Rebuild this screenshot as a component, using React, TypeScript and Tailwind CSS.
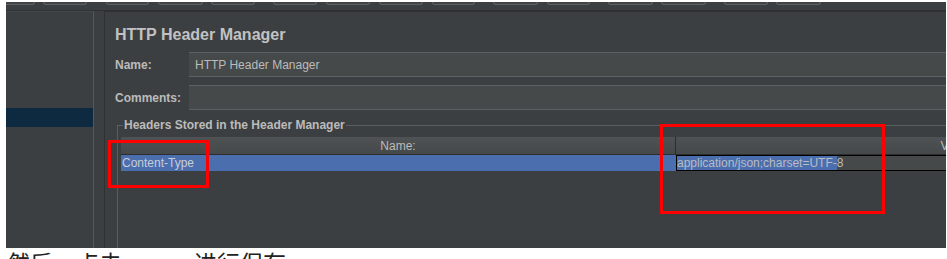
import React from "react";

const buttons: string[] = [
  "w-[29px] ml-0 rounded-bl-none border-l-0",
  "w-[44px] ml-[8px]",
  "w-[43px] ml-[19px]",
  "w-[45px] ml-[9px]",
  "w-[44px] ml-[8px]",
  "w-[44px] ml-[18px]",
  "w-[44px] ml-[9px]",
  "w-[44px] ml-[9px]",
  "w-[43px] ml-[9px]",
  "w-[45px] ml-[18px]",
  "w-[43px] ml-[9px]",
  "w-[45px] ml-[18px]",
  "w-[45px] ml-[8px]",
  "w-[44px] ml-[18px]",
  "w-[45px] ml-[8px]",
];

export default function App() {
  return (
    <div className="relative w-[947px] h-[259px] overflow-hidden bg-white font-['Liberation_Sans',Arial,sans-serif]">
      <div className="ml-[6px] mt-[2px] w-[940px] h-[246px] bg-[#3c3f41] flex flex-col overflow-hidden">
        {/* toolbar remnants */}
        <div className="h-[9px] flex items-start border-b border-[#2e3032] shrink-0">
          {buttons.map((c, i) => (
            <div
              key={i}
              className={`h-[3px] shrink-0 bg-[#414446] border-b border-x border-[#5d6062] rounded-b-[4px] ${c}`}
            />
          ))}
        </div>
        <div className="flex flex-1 min-h-0">
          {/* left tree panel */}
          <div className="w-[88px] shrink-0 border-r border-[#56595b] border-t border-t-[#46494b] flex flex-col">
            <div className="h-[96px]" />
            <div className="h-[19px] bg-[#0e2a40]" />
          </div>
          {/* splitter */}
          <div className="w-[10px] shrink-0 bg-[#3c3f41]" />
          {/* right editor panel */}
          <div className="flex-1 min-w-0 border-l border-[#2f3133] border-t border-t-[#2f3133] flex flex-col overflow-hidden text-[#bbbbbb]">
            <div className="pl-[10px] pt-[13px] h-[40px] text-[16px] font-bold leading-[19px] text-[#c2c2c2]">
              HTTP Header Manager
            </div>
            <div className="flex items-center pl-[10px] h-[25px]">
              <span className="w-[74px] text-[12px] font-bold">Name:</span>
              <div className="flex-1 h-[25px] bg-[#45494a] border-y border-[#5e6163] flex items-center pl-[6px] text-[12px]">
                HTTP Header Manager
              </div>
            </div>
            <div className="flex items-center pl-[10px] h-[25px] mt-[8px]">
              <span className="w-[74px] text-[12px] font-bold">Comments:</span>
              <div className="flex-1 h-[25px] bg-[#45494a] border-y border-[#5e6163]" />
            </div>
            <fieldset className="ml-[12px] mt-[8px] flex-1 border-l border-t border-[#5b5e60] min-w-0">
              <legend className="ml-[5px] px-[1px] text-[12px] font-bold leading-[14px] text-[#bbbbbb]">
                Headers Stored in the Header Manager
              </legend>
              <div className="ml-[3px] mt-[5px] w-[1120px]">
                <div className="flex h-[18px] bg-gradient-to-b from-[#4e5254] to-[#45494a] border-b border-[#2b2d2e] text-[12px] text-[#bbbbbb]">
                  <div className="w-[555px] flex items-center justify-center border-r border-[#2b2d2e]">Name:</div>
                  <div className="w-[562px] flex items-center justify-center">Value:</div>
                </div>
                <div className="flex h-[16px] text-[12px]">
                  <div className="w-[555px] bg-[#4b6eaf] flex items-center pl-[1px] text-[#c8cdd6] leading-none">
                    Content-Type
                  </div>
                  <div className="w-[565px] bg-[#45494a] border border-black flex items-center leading-none">
                    <span className="bg-[#4b6eaf] text-[#b9bcc2] h-[14px] flex items-center">application/json;charset=UTF-</span>
                    <span className="text-[#bbbbbb]">8</span>
                  </div>
                </div>
              </div>
            </fieldset>
          </div>
        </div>
      </div>
      {/* caption line below screenshot */}
      <div className="flex mt-[3px] ml-[7px] text-[23px] leading-[23px] text-[#222] font-['Noto_Sans_CJK_SC',sans-serif]">
        <span>然后，点击</span>
        <span className="ml-[72px]">进行保存</span>
      </div>
      {/* red annotation boxes */}
      <div className="absolute left-[108px] top-[140px] w-[101px] h-[48px] border-[3px] border-[#ff0000]" />
      <div className="absolute left-[660px] top-[124px] w-[225px] h-[90px] border-[3px] border-[#ff0000]" />
    </div>
  );
}
